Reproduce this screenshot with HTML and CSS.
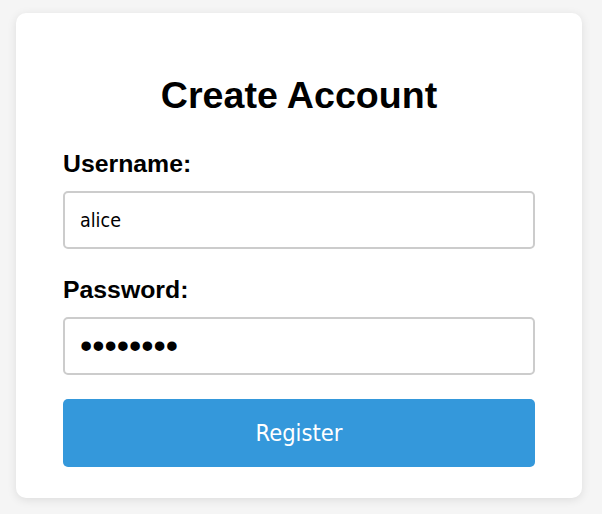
FILE: index.html
```html
<!DOCTYPE html>
<html>
<head>
<meta name="viewport" content="width=device-width, initial-scale=1.0">
<link rel="stylesheet" href="styles.css">
</head>
<body>

<div class="card">
  <h1>Create Account</h1>
  <form class="register-form">
    <div class="field">
      <label for="username">Username:</label>
      <input type="text" id="username" value="alice">
    </div>

    <div class="field field-last">
      <label for="password">Password:</label>
      <input type="password" id="password" class="password" value="secret12">
    </div>

    <button type="button">Register</button>
  </form>
</div>

</body>
</html>
```

FILE: styles.css
```css
* {box-sizing: border-box;}

body {
  margin: 0;
  padding: 13px 20px 17px 16px;
  font-family: "Liberation Sans", Arial, sans-serif;
  background: #f5f5f5;
}

.card {
  width: 566px;
  background: #fff;
  border-radius: 10px;
  box-shadow: 0 2px 10px rgba(0, 0, 0, 0.1);
  padding: 60px 47px 31px 47px;
}

h1 {
  margin: 0 0 32px 0;
  text-align: center;
  font-size: 37.6px;
  line-height: 44px;
  color: #000;
}

.register-form {
  display: flex;
  flex-direction: column;
}

.field {
  display: flex;
  flex-direction: column;
  margin-bottom: 26px;
}

.field-last {
  margin-bottom: 24px;
}

label {
  font-weight: bold;
  font-size: 24.8px;
  line-height: 29px;
  margin-bottom: 13px;
}

input {
  height: 58px;
  padding: 0 15px;
  border: 2px solid #ccc;
  border-radius: 5px;
  font-family: "DejaVu Sans Condensed", "DejaVu Sans", sans-serif;
  font-stretch: condensed;
  font-size: 19.5px;
  color: #000;
}

.password {
  font-family: "Liberation Sans", Arial, sans-serif;
  font-stretch: normal;
  font-size: 35px;
}

button {
  height: 68px;
  border: none;
  border-radius: 5px;
  background: #3498db;
  color: #fff;
  font-family: "DejaVu Sans Condensed", "DejaVu Sans", sans-serif;
  font-stretch: condensed;
  font-size: 23.5px;
}
```
